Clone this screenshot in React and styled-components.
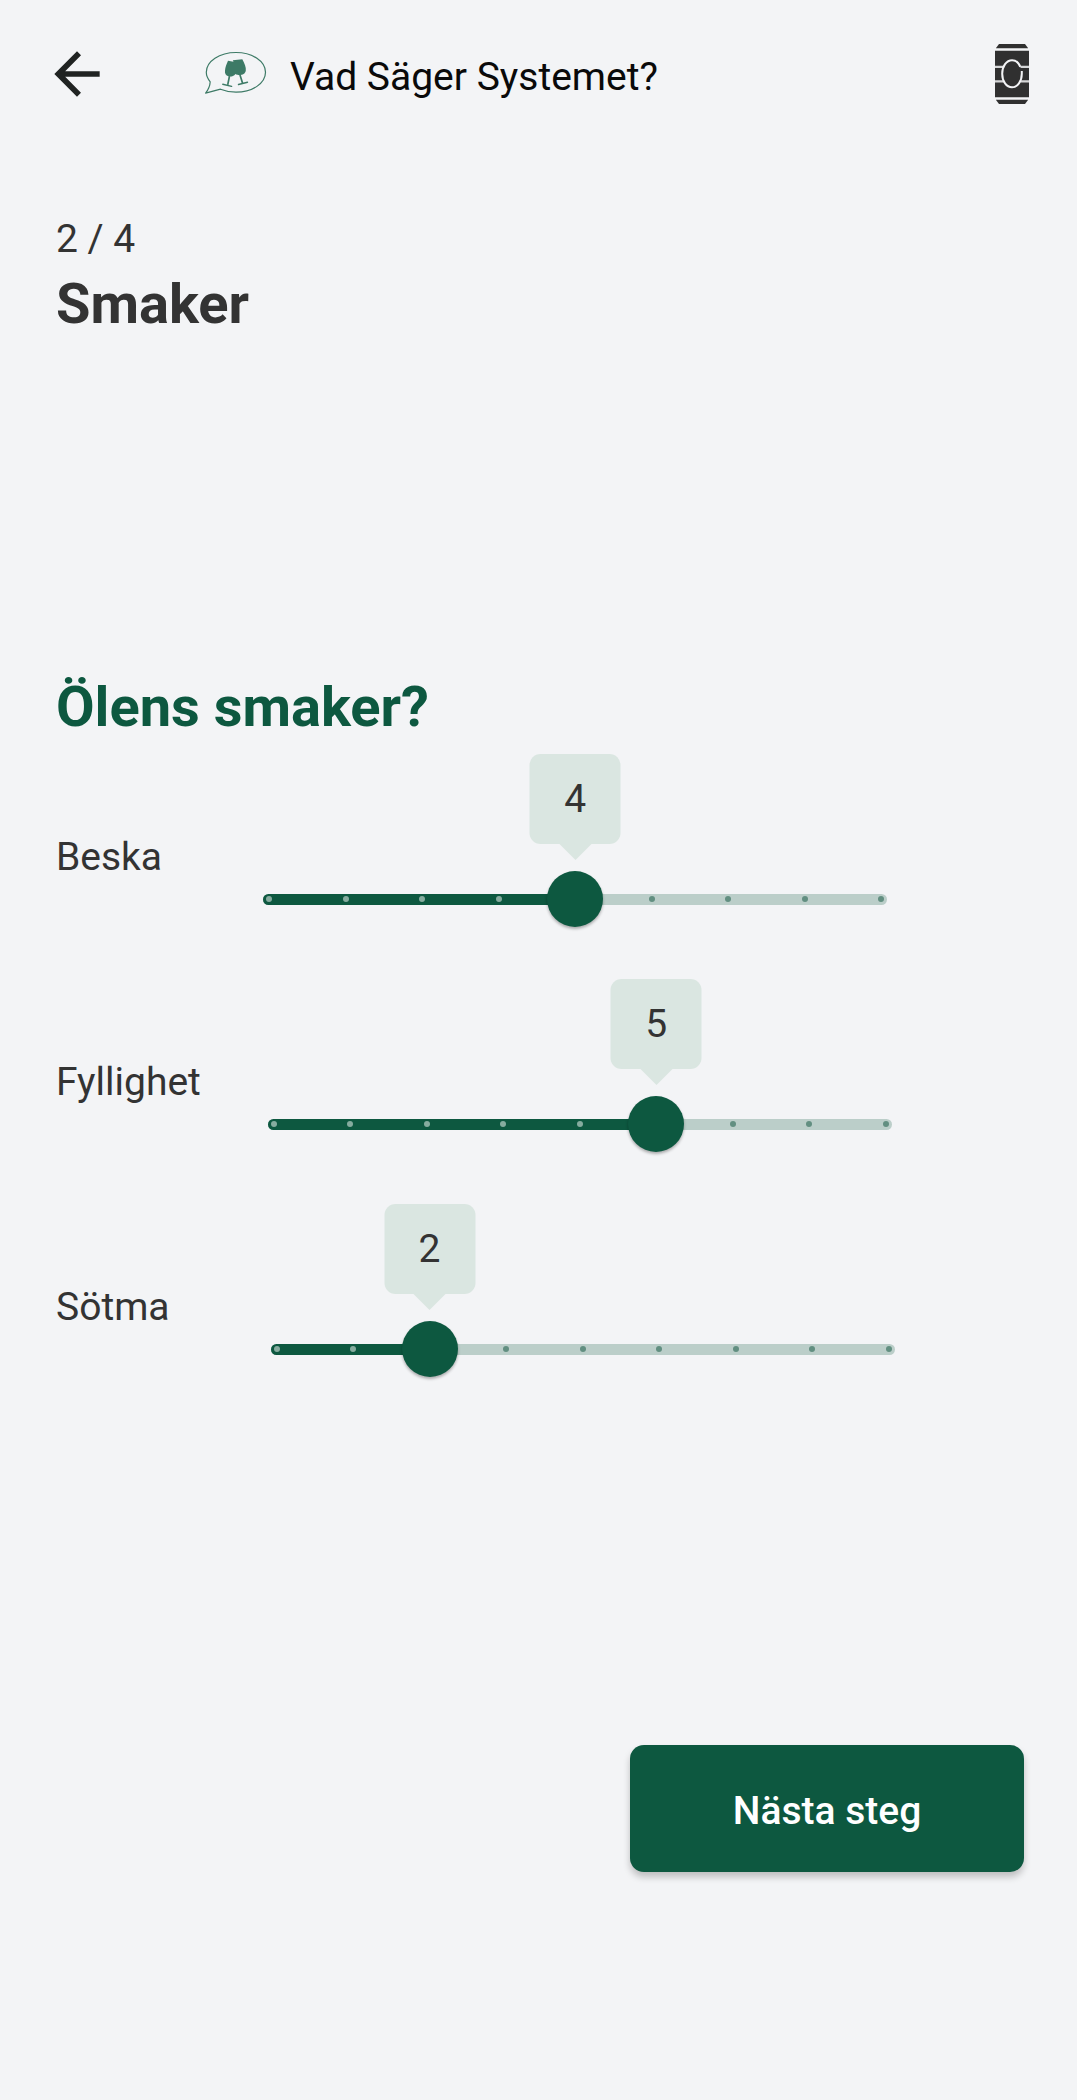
import React, { useState } from "react";
import styled, { createGlobalStyle } from "styled-components";

const GlobalStyle = createGlobalStyle`
  *, *::before, *::after { box-sizing: border-box; }
  body {
    margin: 0;
    background: #f3f4f6;
    color: #333333;
    font-family: Roboto, "Liberation Sans", sans-serif;
    font-size: 39px;
    line-height: 46px;
  }
`;

const Page = styled.div`
  min-height: 100vh;
  display: flex;
  flex-direction: column;
`;

const Header = styled.header`
  display: flex;
  align-items: center;
  height: 148px;
  padding: 0 48px 0 43px;
`;

const IconButton = styled.button`
  display: flex;
  padding: 0;
  border: 0;
  background: none;
  color: #202322;
  cursor: pointer;
`;

const Brand = styled.div`
  flex: 1;
  display: flex;
  align-items: center;
  gap: 23px;
  margin-left: 94px;
`;

const Title = styled.h1`
  margin: 0;
  padding-top: 6px;
  font-size: 39px;
  font-weight: 400;
  color: #0a0a0a;
`;

const Main = styled.main`
  display: flex;
  flex-direction: column;
  padding: 68px 53px 64px 56px;
`;

const Step = styled.p`
  margin: 0 0 9px;
`;

const Heading = styled.h2`
  margin: 0;
  font-size: 56px;
  line-height: 66px;
  font-weight: 700;
`;

const Form = styled.form`
  display: flex;
  flex-direction: column;
  margin-top: 337px;
`;

const Question = styled(Heading)`
  color: #0d5840;
`;

const Rows = styled.div`
  display: flex;
  flex-direction: column;
  gap: 52px;
  margin-top: 14px;
`;

const Row = styled.div`
  display: flex;
  align-items: flex-end;
  gap: ${(p) => p.$gap}px;
`;

const Label = styled.label`
  padding-bottom: 47px;
`;

const Slider = styled.div`
  position: relative;
  flex: 0 1 624px;
  min-width: 0;
  padding-top: 117px;
`;

const Control = styled.div`
  display: grid;
  align-items: center;

  & > * { grid-area: 1 / 1; }
`;

const Rail = styled.div`
  height: 11px;
  border-radius: 6px;
  background: #bbcec9;
  overflow: hidden;
`;

const Fill = styled.div`
  height: 100%;
  background: #0d5840;
`;

const Ticks = styled.div`
  display: flex;
  justify-content: space-between;
  padding: 0 3px;
`;

const Tick = styled.span`
  width: 6px;
  height: 6px;
  border-radius: 50%;
  background: ${(p) => (p.$active ? "#86ac9f" : "#628f81")};
`;

const Range = styled.input`
  appearance: none;
  width: calc(100% + 44px);
  height: 56px;
  margin: 0 -22px;
  background: transparent;
  cursor: pointer;

  &::-webkit-slider-thumb {
    appearance: none;
    width: 56px;
    height: 56px;
    border-radius: 50%;
    background: #0d5840;
    box-shadow: 0 2px 3px rgba(0, 0, 0, 0.3);
  }
  &::-moz-range-thumb {
    width: 56px;
    height: 56px;
    border: 0;
    border-radius: 50%;
    background: #0d5840;
  }
`;

const Bubble = styled.output`
  position: absolute;
  top: 0;
  width: 91px;
  height: 90px;
  display: flex;
  align-items: center;
  justify-content: center;
  border-radius: 11px;
  background: #dae6e1;
  transform: translateX(-50%);

  &::after {
    content: "";
    position: absolute;
    top: 100%;
    left: 50%;
    margin-left: -16px;
    border: 16px solid transparent;
    border-top-color: #dae6e1;
    border-bottom: 0;
  }
`;

const NextButton = styled.button`
  align-self: flex-end;
  width: 394px;
  max-width: 100%;
  height: 127px;
  margin-top: 368px;
  padding: 4px 0 0;
  border: 0;
  border-radius: 14px;
  background: #0d5840;
  color: #ffffff;
  font: inherit;
  font-weight: 500;
  box-shadow: 0 5px 7px rgba(0, 0, 0, 0.22);
  cursor: pointer;
`;

const MAX = 8;

function ArrowBack() {
  return (
    <svg width="68" height="68" viewBox="0 0 24 24" fill="currentColor" aria-hidden="true">
      <path d="M20 11H7.83l5.59-5.59L12 4l-8 8 8 8 1.41-1.41L7.83 13H20v-2z" />
    </svg>
  );
}

function Logo() {
  return (
    <svg width="62" height="46" viewBox="0 0 62 46" fill="none" stroke="#3d7a66" aria-hidden="true">
      <path
        strokeWidth="1.200"
        strokeLinejoin="round"
        d="M5.2 30.8C2.5 27.500 1.300 24.300 1.300 21.300C1.300 10.300 14.500 1.500 31 1.500S60.500 10.300 60.500 21.300S47.500 41.200 31 41.200C25 41.200 20 40 15.500 38.200L0.600 42.200C3.500 38.500 5 34.500 5.200 30.800Z"
      />
      <path
        fill="#3d7a66"
        stroke="none"
        d="M23 9.800L28.500 10.800L27.800 9.300L37.300 8.300C39.500 12.500 41.300 16.500 40.800 19.500C40.300 22.800 37.500 24 34.500 24.200C32.800 24.200 31.800 23.800 30.500 23C28.500 25.500 25.500 26 23.500 25.300C20.800 24.500 19.600 22.500 20 19.500C20.300 16 21.600 13 23 9.800Z"
      />
      <path strokeWidth="1.700" d="M24.500 25L22.700 33.800M35 24L37.600 32.200" />
      <path strokeWidth="1.400" strokeLinecap="round" d="M17.800 33.300L26.600 35.400M33.500 33.500L42.500 31.200" />
    </svg>
  );
}

function Can() {
  return (
    <svg width="34" height="60" viewBox="0 0 34 60" fill="#303030" aria-hidden="true">
      <path d="M4 0H30L33.200 4.300H.8Z" />
      <path d="M0 6.700H34V53.300H0Z" />
      <path d="M.8 55.700H33.200L30 60H4Z" />
      <path stroke="#d5d6d7" strokeWidth="2.200" d="M0 22.900H8.500M25.500 22.900H34M0 37.300H8.500M25.500 37.300H34" />
      <path
        fill="none"
        stroke="#f3f4f6"
        strokeWidth="2"
        d="M25.300 22.900C23.700 18.800 20.600 16.200 17 16.200C11.500 16.200 7.200 22.200 7.200 29.800S11.500 43.300 17 43.300S26.800 37.200 26.800 29.800V27"
      />
    </svg>
  );
}

function TasteRow({ id, label, initial, gap }) {
  const [value, setValue] = useState(initial);
  const at = `calc(6px + (100% - 12px) * ${value / MAX})`;
  return (
    <Row $gap={gap}>
      <Label htmlFor={id}>{label}</Label>
      <Slider>
        <Control>
          <Rail>
            <Fill style={{ width: at }} />
          </Rail>
          <Ticks>
            {Array.from({ length: MAX + 1 }, (_, i) => (
              <Tick key={i} $active={i < value} />
            ))}
          </Ticks>
          <Range
            id={id}
            type="range"
            min={0}
            max={MAX}
            value={value}
            onChange={(e) => setValue(Number(e.target.value))}
          />
        </Control>
        <Bubble htmlFor={id} style={{ left: at }}>
          {value}
        </Bubble>
      </Slider>
    </Row>
  );
}

const tastes = [
  { id: "beska", label: "Beska", initial: 4, gap: 101 },
  { id: "fyllighet", label: "Fyllighet", initial: 5, gap: 67 },
  { id: "sotma", label: "Sötma", initial: 2, gap: 101 },
];

export default function App() {
  return (
    <Page>
      <GlobalStyle />
      <Header>
        <IconButton type="button" aria-label="Tillbaka">
          <ArrowBack />
        </IconButton>
        <Brand>
          <Logo />
          <Title>Vad Säger Systemet?</Title>
        </Brand>
        <IconButton type="button" aria-label="Öl">
          <Can />
        </IconButton>
      </Header>
      <Main>
        <Step>2 / 4</Step>
        <Heading>Smaker</Heading>
        <Form onSubmit={(e) => e.preventDefault()}>
          <Question as="h3">Ölens smaker?</Question>
          <Rows>
            {tastes.map((t) => (
              <TasteRow key={t.id} {...t} />
            ))}
          </Rows>
          <NextButton type="submit">Nästa steg</NextButton>
        </Form>
      </Main>
    </Page>
  );
}
